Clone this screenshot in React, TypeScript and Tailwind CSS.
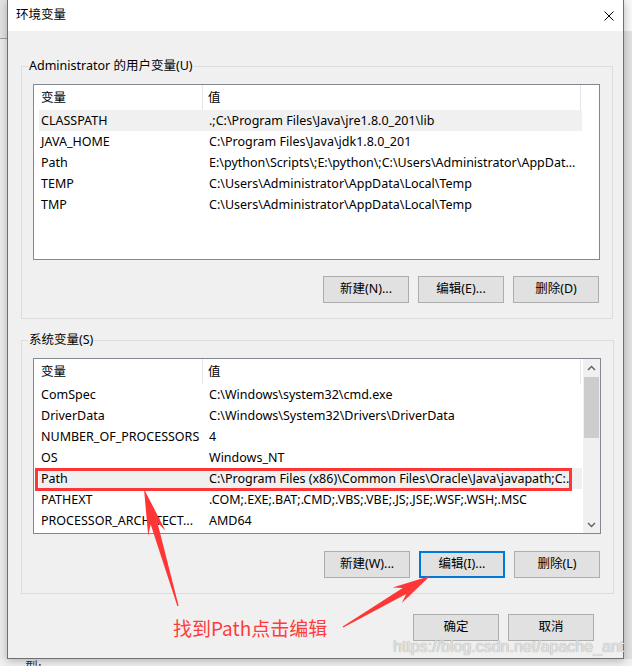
import React from "react";

type Row = { name: string; value: string; active?: boolean; marked?: boolean };

const USER_VARS: Row[] = [
  { name: "CLASSPATH", value: ".;C:\\Program Files\\Java\\jre1.8.0_201\\lib", active: true },
  { name: "JAVA_HOME", value: "C:\\Program Files\\Java\\jdk1.8.0_201" },
  { name: "Path", value: "E:\\python\\Scripts\\;E:\\python\\;C:\\Users\\Administrator\\AppDat..." },
  { name: "TEMP", value: "C:\\Users\\Administrator\\AppData\\Local\\Temp" },
  { name: "TMP", value: "C:\\Users\\Administrator\\AppData\\Local\\Temp" },
];

const SYSTEM_VARS: Row[] = [
  { name: "ComSpec", value: "C:\\Windows\\system32\\cmd.exe" },
  { name: "DriverData", value: "C:\\Windows\\System32\\Drivers\\DriverData" },
  { name: "NUMBER_OF_PROCESSORS", value: "4" },
  { name: "OS", value: "Windows_NT" },
  {
    name: "Path",
    value: "C:\\Program Files (x86)\\Common Files\\Oracle\\Java\\javapath;C:..",
    active: true,
    marked: true,
  },
  { name: "PATHEXT", value: ".COM;.EXE;.BAT;.CMD;.VBS;.VBE;.JS;.JSE;.WSF;.WSH;.MSC" },
  { name: "PROCESSOR_ARCHITECT...", value: "AMD64" },
];

// tapered annotation arrow, tail -> tip
function arrowPoints(tx: number, ty: number, px: number, py: number, headLen: number, headHalf: number, neckHalf: number) {
  const dx = px - tx;
  const dy = py - ty;
  const len = Math.hypot(dx, dy);
  const ux = dx / len;
  const uy = dy / len;
  const vx = -uy;
  const vy = ux;
  const bx = px - ux * headLen;
  const by = py - uy * headLen;
  const nx = px - ux * headLen * 0.78;
  const ny = py - uy * headLen * 0.78;
  const pts = [
    [px, py],
    [bx + vx * headHalf, by + vy * headHalf],
    [nx + vx * neckHalf, ny + vy * neckHalf],
    [tx + vx * 0.6, ty + vy * 0.6],
    [tx - vx * 0.6, ty - vy * 0.6],
    [nx - vx * neckHalf, ny - vy * neckHalf],
    [bx - vx * headHalf, by - vy * headHalf],
  ];
  return pts.map(([x, y]) => `${x.toFixed(1)},${y.toFixed(1)}`).join(" ");
}

function Button({ label, isDefault }: { label: string; isDefault?: boolean }) {
  return (
    <div
      className={`flex h-[27px] w-[86px] items-center justify-center bg-[#e1e1e1] ${
        isDefault ? "border-2 border-[#0078d7]" : "border border-[#adadad]"
      }`}
    >
      {label}
    </div>
  );
}

function Chevron({ up }: { up?: boolean }) {
  return (
    <svg width="9" height="6" viewBox="0 0 9 6">
      <path
        d={up ? "M1 5 L4.5 1.5 L8 5" : "M1 1 L4.5 4.5 L8 1"}
        fill="none"
        stroke="#606060"
        strokeWidth="1.4"
      />
    </svg>
  );
}

function VarList({ rows, scroll }: { rows: Row[]; scroll?: boolean }) {
  return (
    <div className="flex h-[176px] border border-[#828790] bg-white">
      <div className="flex w-[548px] flex-col overflow-hidden">
        {/* column header */}
        <div className="flex h-[25px] shrink-0">
          <div className="flex w-[169px] items-center border-r border-[#e5e5e5] pl-[7px] pt-[1px]">变量</div>
          <div className="flex w-[378px] items-center border-r border-[#e5e5e5] pl-[5px] pt-[1px]">值</div>
        </div>
        {rows.map((r) => (
          <div key={r.name + r.value} className="relative flex h-[21px] shrink-0 whitespace-nowrap">
            {r.active && <div className="absolute inset-y-0 left-[5px] right-0 bg-[#f0f0f0]" />}
            <div className="relative flex w-[169px] items-center overflow-hidden pl-[7px] pt-[1px]">{r.name}</div>
            <div className="relative flex w-[378px] items-center overflow-hidden pl-[6px] pt-[1px]">{r.value}</div>
            {r.marked && (
              <div className="absolute left-[1px] top-0 z-10 h-[23px] w-[537px] border-[3px] border-[#ff3636]" />
            )}
          </div>
        ))}
      </div>
      {scroll && (
        <div className="ml-[1px] flex w-[17px] flex-col bg-[#f0f0f0]">
          <div className="flex h-[17px] items-center justify-center">
            <Chevron up />
          </div>
          <div className="mx-[1px] mt-[1px] h-[61px] bg-[#cdcdcd]" />
          <div className="flex-1" />
          <div className="flex h-[17px] items-center justify-center">
            <Chevron />
          </div>
        </div>
      )}
    </div>
  );
}

function Group({ title, children, className = "" }: { title: string; children: React.ReactNode; className?: string }) {
  return (
    <fieldset className={`border border-[#dcdcdc] p-0 ${className}`}>
      <legend className="ml-[6px] px-[1px] leading-[16px]">{title}</legend>
      <div className="pb-[15px] pl-[11px] pr-[12px] pt-[10px]">{children}</div>
    </fieldset>
  );
}

export default function App() {
  return (
    <div className="relative h-[666px] w-[632px] overflow-hidden bg-[#f0f0f0] font-['Noto_Sans','Noto_Sans_CJK_SC',sans-serif] text-[12.5px] text-black">
      <div className="flex h-[659px]">
        {/* background window, left edge */}
        <div className="flex w-[7px] flex-col">
          <div className="h-[38px] bg-[#e2e2e2]" />
          <div className="h-px bg-[#a0a0a0]" />
          <div className="flex-1 bg-[#ebebeb]" />
        </div>

        {/* dialog */}
        <div className="z-10 flex h-[659px] w-[617px] flex-col border-x border-b border-[#707070] bg-[#f0f0f0] shadow-[0_2px_8px_rgba(0,0,0,0.25)]">
          <div className="flex h-[31px] shrink-0 items-center justify-between bg-white pl-[8px] pr-[9px]">
            <span>环境变量</span>
            <svg width="10" height="10" viewBox="0 0 10 10">
              <path d="M0.5 0.5 L9.5 9.5 M9.5 0.5 L0.5 9.5" stroke="#000" strokeWidth="1" />
            </svg>
          </div>

          <div className="ml-[13px] mr-[10px] pt-[27px]">
            <Group title="Administrator 的用户变量(U)">
              <VarList rows={USER_VARS} />
              <div className="mt-[16px] flex justify-end gap-[9px] pr-[1px]">
                <Button label="新建(N)..." />
                <Button label="编辑(E)..." />
                <Button label="删除(D)" />
              </div>
            </Group>

            <Group title="系统变量(S)" className="mt-[13px]">
              <VarList rows={SYSTEM_VARS} scroll />
              <div className="mt-[17px] flex justify-end gap-[9px] pr-[1px]">
                <Button label="新建(W)..." />
                <Button label="编辑(I)..." isDefault />
                <Button label="删除(L)" />
              </div>
            </Group>

            <div className="mt-[20px] flex items-center justify-between pr-[19px]">
              <span className="ml-[152px] mt-[1px] font-['Noto_Sans_CJK_SC',sans-serif] text-[19px] leading-[24px] text-[#ff3b3b]">
                找到Path点击编辑
              </span>
              <div className="flex gap-[9px]">
                <Button label="确定" />
                <Button label="取消" />
              </div>
            </div>
          </div>
        </div>

        {/* background window, right edge */}
        <div className="flex flex-1 flex-col">
          <div className="h-[31px] bg-[#f7f7f7]" />
          <div className="flex-1 bg-[#e0e0e0]" />
        </div>
      </div>

      {/* background window text peeking out below the dialog */}
      <div className="h-[7px] overflow-hidden pl-[25px] font-['Noto_Sans_CJK_SC',sans-serif] text-[13px] leading-[13px] text-[#333]">
        型:
      </div>

      {/* annotation arrows */}
      <svg className="pointer-events-none absolute left-0 top-0 z-20" width="632" height="666">
        <polygon points={arrowPoints(178, 606, 144, 489, 46, 9, 3.5)} fill="#ff3636" />
        <polygon points={arrowPoints(343, 627, 430, 576, 38, 9, 3.5)} fill="#ff3636" />
      </svg>

      {/* watermark */}
      <div className="pointer-events-none absolute left-[393px] top-[638px] z-20 font-['Liberation_Sans',sans-serif] text-[16px] leading-[18px] text-[#e4e4e4] [text-shadow:0_0_1px_#8a8a8a]">
        https://blog.csdn.net/apache_ant
      </div>
    </div>
  );
}
